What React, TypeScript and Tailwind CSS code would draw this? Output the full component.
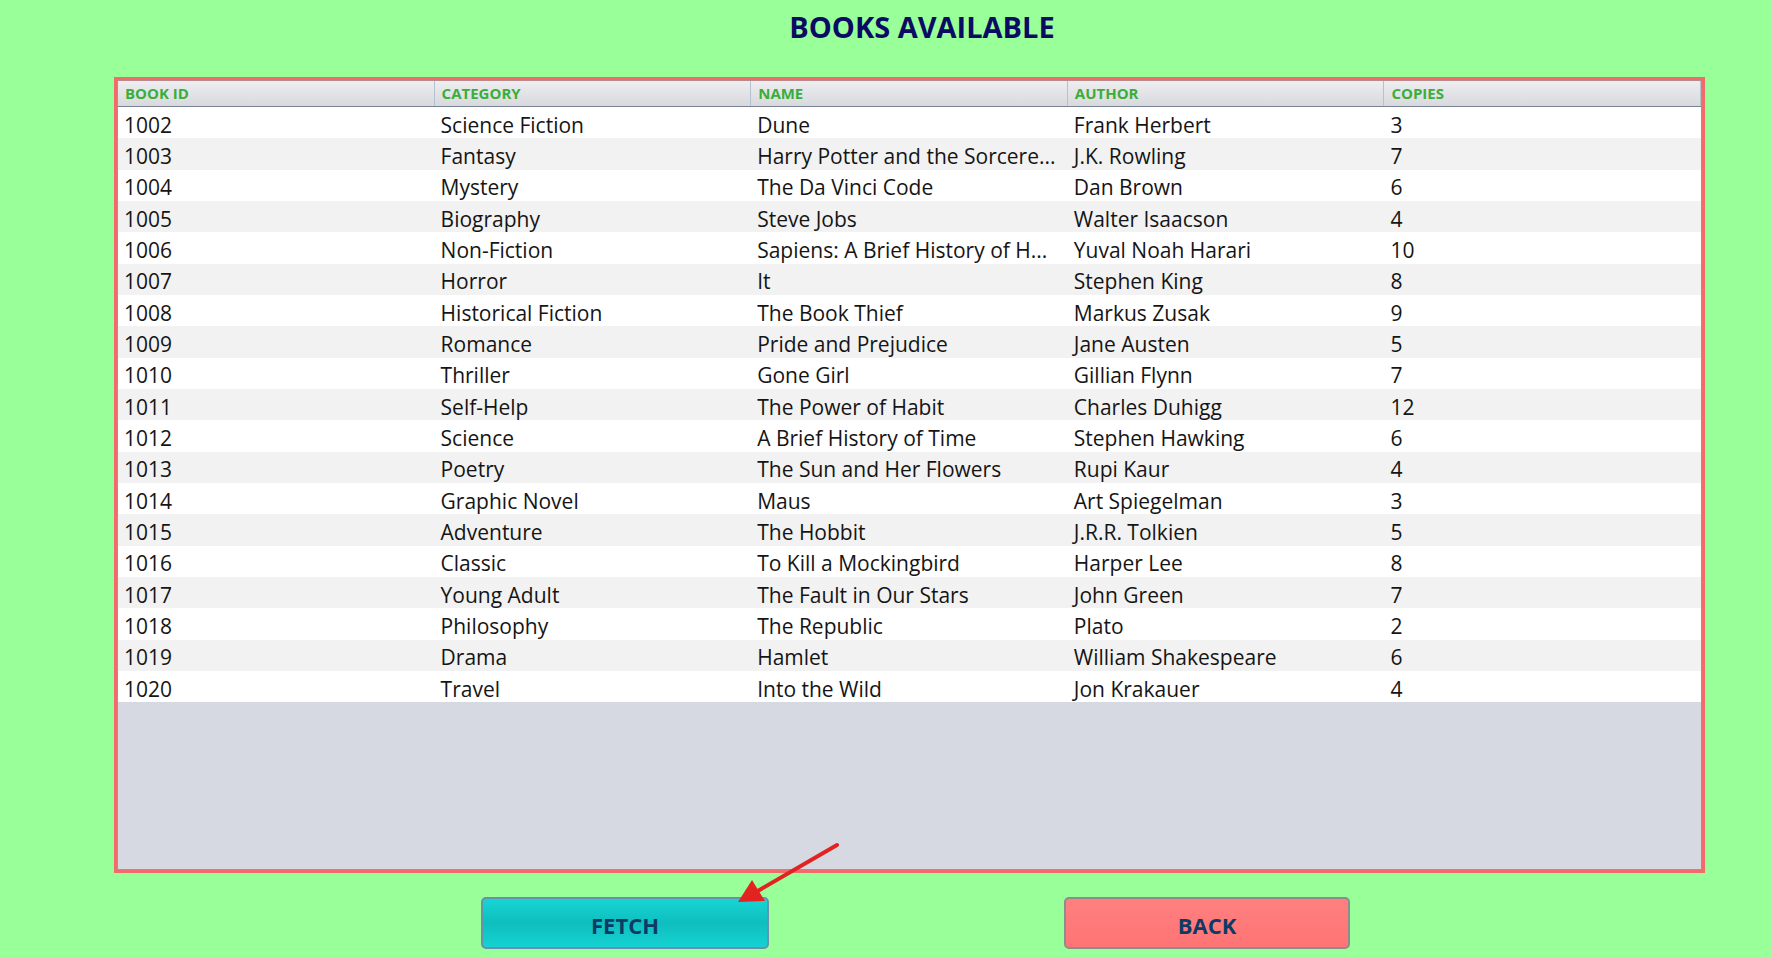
import React from "react";

const rows: [string, string, string, string, string][] = [
  ["1002", "Science Fiction", "Dune", "Frank Herbert", "3"],
  ["1003", "Fantasy", "Harry Potter and the Sorcere...", "J.K. Rowling", "7"],
  ["1004", "Mystery", "The Da Vinci Code", "Dan Brown", "6"],
  ["1005", "Biography", "Steve Jobs", "Walter Isaacson", "4"],
  ["1006", "Non-Fiction", "Sapiens: A Brief History of H...", "Yuval Noah Harari", "10"],
  ["1007", "Horror", "It", "Stephen King", "8"],
  ["1008", "Historical Fiction", "The Book Thief", "Markus Zusak", "9"],
  ["1009", "Romance", "Pride and Prejudice", "Jane Austen", "5"],
  ["1010", "Thriller", "Gone Girl", "Gillian Flynn", "7"],
  ["1011", "Self-Help", "The Power of Habit", "Charles Duhigg", "12"],
  ["1012", "Science", "A Brief History of Time", "Stephen Hawking", "6"],
  ["1013", "Poetry", "The Sun and Her Flowers", "Rupi Kaur", "4"],
  ["1014", "Graphic Novel", "Maus", "Art Spiegelman", "3"],
  ["1015", "Adventure", "The Hobbit", "J.R.R. Tolkien", "5"],
  ["1016", "Classic", "To Kill a Mockingbird", "Harper Lee", "8"],
  ["1017", "Young Adult", "The Fault in Our Stars", "John Green", "7"],
  ["1018", "Philosophy", "The Republic", "Plato", "2"],
  ["1019", "Drama", "Hamlet", "William Shakespeare", "6"],
  ["1020", "Travel", "Into the Wild", "Jon Krakauer", "4"],
];

const headers = ["BOOK ID", "CATEGORY", "NAME", "AUTHOR", "COPIES"];

export default function App() {
  return (
    <div
      className="relative w-[1772px] h-[958px] overflow-hidden bg-[#99ff99]"
      style={{ fontFamily: '"Open Sans", "Noto Sans", sans-serif' }}
    >
      <div className="flex justify-center pl-[72px] pt-[13px]">
        <h1 className="text-[29px] leading-[28px] font-bold text-[#0b0b63]">BOOKS AVAILABLE</h1>
      </div>

      <div className="ml-[114px] mt-[36px] w-[1591px] h-[796px] border-[3px] border-[#f26b6b]">
        <div className="w-full h-full border border-[#b58b8e] bg-[#d6d9e1] flex flex-col">
          <div className="grid grid-cols-5 h-[26px] bg-gradient-to-b from-[#eeeef0] to-[#d8d9de] border-b border-[#7a8392]">
            {headers.map((h) => (
              <div
                key={h}
                className="flex items-center pl-[7px] border-r border-[#b4c2d0] text-[15px] font-bold text-[#3aae3a]"
              >
                {h}
              </div>
            ))}
          </div>
          {rows.map((r, i) => (
            <div
              key={r[0]}
              className={`grid grid-cols-5 h-[31.33px] ${i % 2 === 0 ? "bg-white" : "bg-[#f2f2f2]"}`}
            >
              {r.map((c, j) => (
                <div
                  key={j}
                  className="flex items-center pl-[6px] pt-[5px] text-[21px] leading-none text-[#151515] whitespace-nowrap overflow-hidden"
                >
                  {c}
                </div>
              ))}
            </div>
          ))}
        </div>
      </div>

      <div className="flex ml-[481px] mt-[24px] gap-[295px]">
        <button className="w-[288px] h-[52px] pt-[4px] rounded-[5px] border-2 border-[#6d8fae] bg-gradient-to-b from-[#17d5d5] via-[#0fbebe] to-[#15d2d2] text-[22px] font-bold text-[#0d3a66]">
          FETCH
        </button>
        <button className="w-[286px] h-[52px] pt-[4px] rounded-[5px] border-2 border-[#8d8d8d] bg-gradient-to-b from-[#ff8080] to-[#ff7474] text-[22px] font-bold text-[#0d3a66]">
          BACK
        </button>
      </div>

      <svg className="absolute left-0 top-0 pointer-events-none" width="1772" height="958">
        <line x1="837" y1="845" x2="756" y2="892" stroke="#e32222" strokeWidth="4" strokeLinecap="round" />
        <polygon points="738,902 752,880 765,901" fill="#e32222" />
      </svg>
    </div>
  );
}
